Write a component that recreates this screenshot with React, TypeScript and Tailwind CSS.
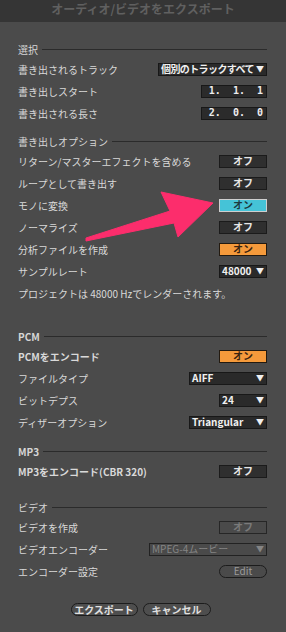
const font = { fontFamily: '"Noto Sans CJK JP", "Noto Sans", sans-serif' };

function Section({ title, className = "" }: { title: string; className?: string }) {
  return (
    <div className={`flex h-[18px] items-center gap-1 text-[10px] text-[#d6d6d6] ${className}`}>
      <span>{title}</span>
      <div className="h-px flex-1 bg-[#2b2b2b]" />
    </div>
  );
}

function Row({ label, children, bold = false }: { label: string; children?: React.ReactNode; bold?: boolean }) {
  return (
    <div className="flex h-[22px] items-center justify-between text-[10px] text-[#d9d9d9]">
      <span className={`whitespace-nowrap ${bold ? "font-bold" : ""}`}>{label}</span>
      {children}
    </div>
  );
}

type ToggleKind = "off" | "cyan" | "orange" | "disabled";

function Toggle({ kind }: { kind: ToggleKind }) {
  const styles: Record<ToggleKind, string> = {
    off: "bg-[#2f2f2f] border-[#1b1b1b] text-[#e6e6e6]",
    cyan: "bg-[#45c3d7] border-[#cfcfcf] text-[#1d3a40]",
    orange: "bg-[#f59a3b] border-[#231a10] text-[#3a2410]",
    disabled: "bg-[#4a4a4a] border-[#262626] text-[#7a7a7a]",
  };
  const label = kind === "off" || kind === "disabled" ? "オフ" : "オン";
  return (
    <div className={`flex h-[13px] w-[48px] items-center justify-center border text-[10px] leading-none font-bold ${styles[kind]}`}>
      {label}
    </div>
  );
}

function Dropdown({ value, width, disabled = false, tight = false }: { value: string; width: string; disabled?: boolean; tight?: boolean }) {
  return (
    <div
      className={`flex h-[13px] items-center justify-between whitespace-nowrap border pl-[2px] pr-[2px] text-[10px] leading-none ${width} ${
        disabled ? "bg-[#4a4a4a] border-[#222] text-[#858585]" : "bg-[#2a2a2a] border-[#181818] text-[#f0f0f0] font-bold"
      }`}
    >
      <span className={tight ? "tracking-[-0.6px]" : ""}>{value}</span>
      <span className="text-[8px]">▼</span>
    </div>
  );
}

function NumberBox({ value }: { value: string }) {
  return (
    <div
      className="flex h-[13px] w-[66px] items-center justify-end border border-[#181818] bg-[#2b2b2b] pr-[3px] text-[10px] leading-none font-bold text-[#eeeeee] whitespace-pre"
      style={{ fontFamily: '"DejaVu Sans Mono", monospace' }}
    >
      {value}
    </div>
  );
}

function Pill({ label, className = "" }: { label: string; className?: string }) {
  return (
    <div className={`flex h-[13px] items-center justify-center rounded-full border border-[#1c1c1c] text-[10px] leading-none ${className}`}>
      {label}
    </div>
  );
}

export default function App() {
  return (
    <div className="relative h-[632px] w-[286px] overflow-hidden bg-[#4b4b4b]" style={font}>
      <div className="flex h-[22px] items-center justify-center bg-[#353535] pb-[4px] text-[12px] font-bold text-[#606060]">
        オーディオ/ビデオをエクスポート
      </div>

      <div className="pl-[18px] pr-[19px] pt-[18px]">
        <Section title="選択" />
        <Row label="書き出されるトラック">
          <Dropdown value="個別のトラックすべて" width="w-[109px]" tight />
        </Row>
        <Row label="書き出しスタート">
          <NumberBox value="1.  1.  1" />
        </Row>
        <Row label="書き出される長さ">
          <NumberBox value="2.  0.  0" />
        </Row>

        <Section title="書き出しオプション" className="mt-[8px]" />
        <Row label="リターン/マスターエフェクトを含める">
          <Toggle kind="off" />
        </Row>
        <Row label="ループとして書き出す">
          <Toggle kind="off" />
        </Row>
        <Row label="モノに変換">
          <Toggle kind="cyan" />
        </Row>
        <Row label="ノーマライズ">
          <Toggle kind="off" />
        </Row>
        <Row label="分析ファイルを作成">
          <Toggle kind="orange" />
        </Row>
        <Row label="サンプルレート">
          <Dropdown value="48000" width="w-[48px]" />
        </Row>
        <Row label="プロジェクトは 48000 Hzでレンダーされます。" />

        <Section title="PCM" className="mt-[23px] font-bold" />
        <Row label="PCMをエンコード" bold>
          <Toggle kind="orange" />
        </Row>
        <Row label="ファイルタイプ">
          <Dropdown value="AIFF" width="w-[78px]" />
        </Row>
        <Row label="ビットデプス">
          <Dropdown value="24" width="w-[48px]" />
        </Row>
        <Row label="ディザーオプション">
          <Dropdown value="Triangular" width="w-[78px]" />
        </Row>

        <Section title="MP3" className="mt-[9px] font-bold" />
        <Row label="MP3をエンコード(CBR 320)" bold>
          <Toggle kind="off" />
        </Row>

        <Section title="ビデオ" className="mt-[16px]" />
        <Row label="ビデオを作成">
          <Toggle kind="disabled" />
        </Row>
        <Row label="ビデオエンコーダー">
          <Dropdown value="MPEG-4ムービー" width="w-[118px]" disabled />
        </Row>
        <Row label="エンコーダー設定">
          <Pill label="Edit" className="w-[48px] bg-[#4a4a4a] text-[#9a9a9a]" />
        </Row>

        <div className="mt-[21px] flex justify-center gap-[5px] pr-[4px]">
          <Pill label="エクスポート" className="w-[67px] bg-[#4e4e4e] font-bold text-[#e0e0e0]" />
          <Pill label="キャンセル" className="w-[68px] bg-[#4e4e4e] font-bold text-[#e0e0e0]" />
        </div>
      </div>

      <svg className="pointer-events-none absolute left-0 top-0" width="286" height="632">
        <polygon
          points="86,238 170,211 161,192 213,203 178,237 174,223 86,241"
          fill="#fc2d6c"
          stroke="#fc2d6c"
          strokeLinejoin="round"
          strokeWidth="1"
        />
      </svg>
    </div>
  );
}
